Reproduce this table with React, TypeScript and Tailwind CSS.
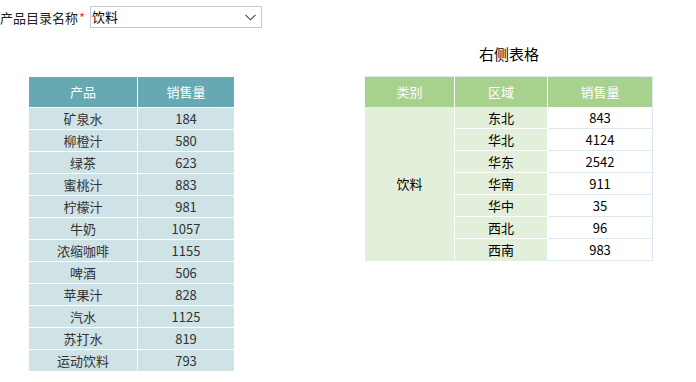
import React from "react";

const left: [string, string][] = [
  ["矿泉水", "184"],
  ["柳橙汁", "580"],
  ["绿茶", "623"],
  ["蜜桃汁", "883"],
  ["柠檬汁", "981"],
  ["牛奶", "1057"],
  ["浓缩咖啡", "1155"],
  ["啤酒", "506"],
  ["苹果汁", "828"],
  ["汽水", "1125"],
  ["苏打水", "819"],
  ["运动饮料", "793"],
];

const right: [string, string][] = [
  ["东北", "843"],
  ["华北", "4124"],
  ["华东", "2542"],
  ["华南", "911"],
  ["华中", "35"],
  ["西北", "96"],
  ["西南", "983"],
];

export default function App() {
  return (
    <div
      className="relative w-[696px] h-[382px] bg-white text-[13px] text-[#222]"
      style={{ fontFamily: '"Microsoft YaHei", "Noto Sans CJK SC", sans-serif' }}
    >
      <div className="flex items-center pt-[6px] h-[28px]">
        <span className="leading-[21px]">产品目录名称</span>
        <span className="text-[#ff3333] leading-[21px] ml-[1px] mr-[5px]">*</span>
        <div className="flex items-center justify-between w-[172px] h-[22px] border border-[#c8c8c8] pl-[1px] pr-[5px]">
          <span className="leading-[20px] text-black">饮料</span>
          <svg width="11" height="7" viewBox="0 0 11 7" fill="none">
            <path d="M0.5 0.8 L5.5 5.8 L10.5 0.8" stroke="#444" strokeWidth="1.1" />
          </svg>
        </div>
      </div>
      <div className="flex">
        <div className="ml-[29px] mt-[49px] grid grid-cols-[108px_96px] gap-px bg-white w-[205px]">
          <div className="h-[30px] bg-[#66a9b2] text-white flex items-center justify-center">产品</div>
          <div className="h-[30px] bg-[#66a9b2] text-white flex items-center justify-center">销售量</div>
          {left.map(([n, v]) => (
            <React.Fragment key={n}>
              <div className="h-[21px] bg-[#cfe2e6] text-[#333] flex items-center justify-center">{n}</div>
              <div className="h-[21px] bg-[#cfe2e6] text-[#333] flex items-center justify-center">{v}</div>
            </React.Fragment>
          ))}
        </div>
        <div className="ml-[131px] flex flex-col w-[288px]">
          <div className="h-[48px] flex items-center justify-center text-[15px] text-black pt-[4px]">右侧表格</div>
          <div className="flex h-[31px] border-t border-r border-[#dde7f0] bg-[#a9d18e] text-white">
            <div className="w-[90px] border-r border-white flex items-center justify-center">类别</div>
            <div className="w-[93px] border-r border-white flex items-center justify-center">区域</div>
            <div className="flex-1 flex items-center justify-center">销售量</div>
          </div>
          <div className="flex text-black">
            <div className="w-[90px] bg-[#e2efda] border-r border-white flex items-center justify-center">饮料</div>
            <div className="w-[93px] flex flex-col border-r border-white">
              {right.map(([r], i) => (
                <div
                  key={r}
                  className={
                    "h-[22px] bg-[#e2efda] flex items-center justify-center " +
                    (i < right.length - 1 ? "border-b border-white" : "")
                  }
                >
                  {r}
                </div>
              ))}
            </div>
            <div className="flex-1 flex flex-col border-r border-[#dde7f0]">
              {right.map(([r, v]) => (
                <div key={r} className="h-[22px] bg-white border-b border-[#dde7f0] flex items-center justify-center">
                  {v}
                </div>
              ))}
            </div>
          </div>
        </div>
      </div>
    </div>
  );
}
